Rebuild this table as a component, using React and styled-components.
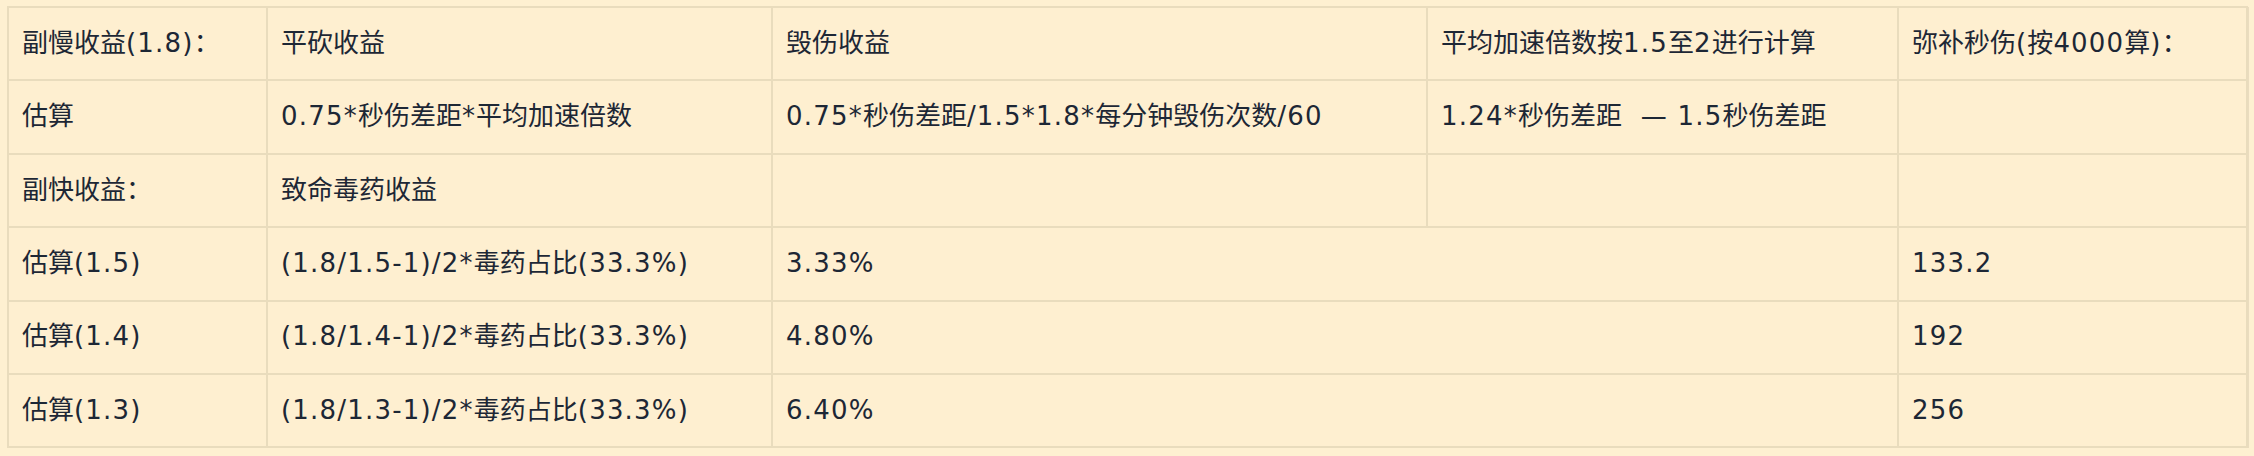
import React from 'react';
import styled, { createGlobalStyle } from 'styled-components';

const GlobalStyle = createGlobalStyle`
  html, body {
    margin: 0;
    padding: 0;
    background: #fef0d1;
  }
`;

const Page = styled.div`
  padding: 6px 8px 0 7px;
  font-family: "DejaVu Sans", "Noto Sans CJK SC", sans-serif;
  font-size: 26px;
  color: #1d2735;
`;

const Table = styled.table`
  width: 2239px;
  border-collapse: collapse;
  table-layout: fixed;
  background: #feefd0;
  box-shadow: 1px 1px 0 #eadcbf;
`;

const Row = styled.tr`
  height: 73.4px;
`;

const Cell = styled.td`
  border: 2px solid #e9dcbd;
  padding: 0 13px;
  vertical-align: middle;
  white-space: nowrap;
  line-height: 1.3;
`;

// latin runs are a touch wider in the original font
const Latin = styled.span`
  letter-spacing: 1.2px;
`;

const widths = [259, 505, 655, 471, 349];

const rows = [
  ['副慢收益(1.8)：', '平砍收益', '毁伤收益', '平均加速倍数按1.5至2进行计算', '弥补秒伤(按4000算)：'],
  ['估算', '0.75*秒伤差距*平均加速倍数', '0.75*秒伤差距/1.5*1.8*每分钟毁伤次数/60', '1.24*秒伤差距\u00a0\u00a0— 1.5秒伤差距', ''],
  ['副快收益：', '致命毒药收益', '', '', ''],
];

const poison = [
  ['1.5', '3.33%', '133.2'],
  ['1.4', '4.80%', '192'],
  ['1.3', '6.40%', '256'],
];

const Text = ({ value }) =>
  value.split(/([\x20-\x7e\u00a0\u2014]+)/).map((part, i) =>
    i % 2 ? <Latin key={i}>{part}</Latin> : part
  );

export default function App() {
  return (
    <Page>
      <GlobalStyle />
      <Table>
        <colgroup>
          {widths.map((w, i) => (
            <col key={i} style={{ width: w }} />
          ))}
        </colgroup>
        <tbody>
          {rows.map((r, i) => (
            <Row key={i}>
              {r.map((c, j) => (
                <Cell key={j}>
                  <Text value={c} />
                </Cell>
              ))}
            </Row>
          ))}
          {poison.map(([x, pct, dps]) => (
            <Row key={x}>
              <Cell><Text value={`估算(${x})`} /></Cell>
              <Cell><Text value={`(1.8/${x}-1)/2*毒药占比(33.3%)`} /></Cell>
              <Cell colSpan={2}><Text value={pct} /></Cell>
              <Cell><Text value={dps} /></Cell>
            </Row>
          ))}
        </tbody>
      </Table>
    </Page>
  );
}
